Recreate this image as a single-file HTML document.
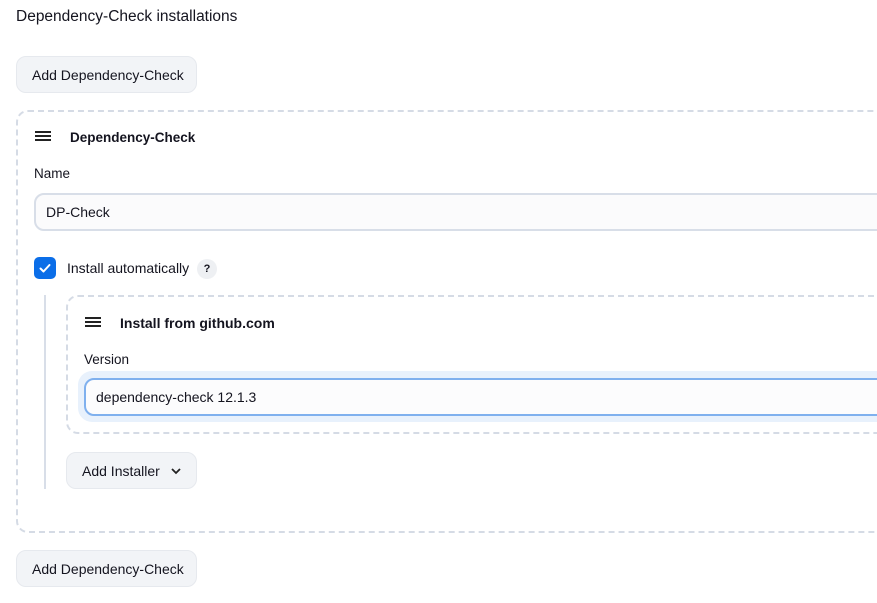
<!DOCTYPE html>
<html><head><style>
body{margin:0;width:877px;height:603px;overflow:hidden;background:#fff;font-family:"Liberation Sans",sans-serif;color:#14141f;position:relative}
.a{position:absolute}
.btn{position:absolute;background:#f2f4f7;border:1px solid #e6e9ee;border-radius:10px;font-size:14px;box-sizing:border-box;display:flex;align-items:center;padding-left:15px}
.dash{position:absolute;border:2px dashed #d5dbe5;border-radius:12px;box-sizing:border-box}
.inp{position:absolute;background:#fbfbfc;border:2px solid #d8dee8;border-radius:10px;box-sizing:border-box;font-size:14px;display:flex;align-items:center;padding-left:10px}
.ham{position:absolute;width:16px;height:10px;border-top:2px solid #222;border-bottom:2px solid #222;box-sizing:border-box}
.ham:after{content:"";position:absolute;left:0;right:0;top:2px;border-top:2px solid #222}
.b{font-weight:bold;font-size:13.5px}
.l{font-size:14px}
</style></head><body>
<div class="a l" style="left:16px;top:8px;font-size:15.5px">Dependency-Check installations</div>
<div class="btn" style="left:16px;top:56px;width:181px;height:37px">Add Dependency-Check</div>
<div class="dash" style="left:16px;top:110px;width:900px;height:423px"></div>
<div class="ham" style="left:35px;top:131px"></div>
<div class="a b" style="left:70px;top:130px">Dependency-Check</div>
<div class="a l" style="left:34px;top:166px;font-size:13.5px">Name</div>
<div class="inp" style="left:34px;top:193px;width:900px;height:38px">DP-Check</div>
<div class="a" style="left:34px;top:257px;width:22px;height:22px;background:#0b6ee8;border-radius:5px"><svg width="22" height="22"><path d="M6.5 11.5l3 3 6-6.5" stroke="#fff" stroke-width="2" fill="none" stroke-linecap="round" stroke-linejoin="round"/></svg></div>
<div class="a l" style="left:67px;top:260px;font-size:14px">Install automatically</div>
<div class="a" style="left:197px;top:259px;width:20px;height:20px;border-radius:50%;background:#eef0f3;font-size:11px;font-weight:bold;text-align:center;line-height:20px">?</div>
<div class="a" style="left:44px;top:295px;width:2px;height:194px;background:#d8dee8"></div>
<div class="dash" style="left:66px;top:295px;width:900px;height:139px"></div>
<div class="ham" style="left:85px;top:317px"></div>
<div class="a b" style="left:120px;top:315px;font-size:14px">Install from github.com</div>
<div class="a" style="left:84px;top:352px;font-size:13.5px">Version</div>
<div class="a" style="left:78px;top:371px;width:900px;height:51px;background:#e8f1fc;border-radius:14px"></div>
<div class="inp" style="left:84px;top:378px;width:900px;height:38px;border-color:#7fb0ee;background:#fcfcfd">dependency-check 12.1.3</div>
<div class="btn" style="left:66px;top:452px;width:131px;height:37px">Add Installer<svg style="margin-left:10px" width="12" height="8"><path d="M2 2l4 4 4-4" stroke="#222" stroke-width="1.8" fill="none"/></svg></div>
<div class="btn" style="left:16px;top:550px;width:181px;height:37px">Add Dependency-Check</div>
</body></html>
